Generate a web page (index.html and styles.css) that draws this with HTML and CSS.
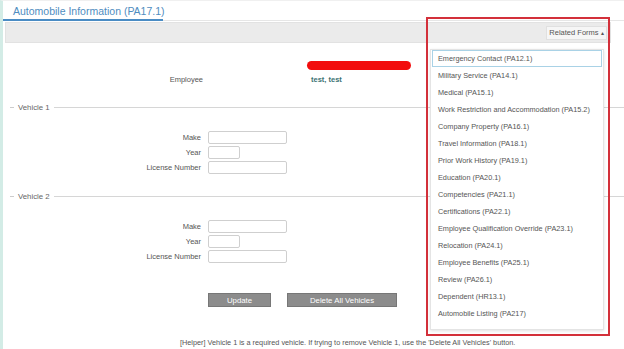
FILE: index.html
```html
<!DOCTYPE html>
<html lang="en">
<head>
    <meta charset="UTF-8">
    <title>Automobile Information (PA17.1)</title>
    <link rel="stylesheet" href="styles.css">
</head>
<body>
    <div class="page">
        <div class="tabs">
            <div class="tab">Automobile Information (PA17.1)</div>
        </div>

        <div class="toolbar">
            <button class="related-btn">Related Forms <span class="caret">&#9652;</span></button>
        </div>

        <div class="employee">
            <div class="label">Employee</div>
            <div class="value">
                <div class="redact"></div>
                <div class="name">test, test</div>
            </div>
        </div>

        <div class="legend"><span class="dash"></span><span>Vehicle 1</span><span class="rule"></span></div>
        <div class="fields">
            <label>Make</label><input type="text" class="wide">
            <label>Year</label><input type="text" class="short">
            <label>License Number</label><input type="text" class="wide">
        </div>

        <div class="legend"><span class="dash"></span><span>Vehicle 2</span><span class="rule"></span></div>
        <div class="fields">
            <label>Make</label><input type="text" class="wide">
            <label>Year</label><input type="text" class="short">
            <label>License Number</label><input type="text" class="wide">
        </div>

        <div class="actions">
            <button class="update">Update</button>
            <button class="delete">Delete All Vehicles</button>
        </div>

        <p class="helper">[Helper] Vehicle 1 is a required vehicle. If trying to remove Vehicle 1, use the 'Delete All Vehicles' button.</p>

        <!-- highlighted related forms menu -->
        <div class="highlight"></div>
        <ul class="menu">
            <li class="active">Emergency Contact (PA12.1)</li>
            <li>Military Service (PA14.1)</li>
            <li>Medical (PA15.1)</li>
            <li>Work Restriction and Accommodation (PA15.2)</li>
            <li>Company Property (PA16.1)</li>
            <li>Travel Information (PA18.1)</li>
            <li>Prior Work History (PA19.1)</li>
            <li>Education (PA20.1)</li>
            <li>Competencies (PA21.1)</li>
            <li>Certifications (PA22.1)</li>
            <li>Employee Qualification Override (PA23.1)</li>
            <li>Relocation (PA24.1)</li>
            <li>Employee Benefits (PA25.1)</li>
            <li>Review (PA26.1)</li>
            <li>Dependent (HR13.1)</li>
            <li>Automobile Listing (PA217)</li>
        </ul>
    </div>
</body>
</html>
```

FILE: styles.css
```css
body {
    margin: 0;
    background-color: white;
    font-family: "Liberation Sans", Arial, sans-serif;
    font-size: 7.5px;
    color: #555;
}
.page {
    position: relative;
    height: 349px;
    border-left: 3px solid #d3ece6;
    border-top: 1px solid #f0f0f0;
    box-sizing: border-box;
    overflow: hidden;
}
.tabs {
    height: 19px;
    border-bottom: 1px solid #e6e6e6;
}
.tab {
    width: 150px;
    height: 18px;
    padding-left: 10px;
    line-height: 20px;
    font-size: 10.5px;
    color: #4f8dc0;
    white-space: nowrap;
    border-bottom: 2px solid #4a8cc4;
}
.toolbar {
    margin: 1px 13px 0 2px;
    height: 21px;
    background-color: #ebebeb;
    border: 1px solid #e2e2e2;
    box-sizing: border-box;
    display: flex;
    justify-content: flex-end;
    align-items: center;
    padding-right: 3px;
}
.related-btn {
    height: 14px;
    width: 61px;
    padding: 0;
    background-color: #f6f6f6;
    border: 1px solid #e0e0e0;
    font-family: inherit;
    font-size: 7.5px;
    color: #555;
}
.caret {
    font-size: 6px;
}
.employee {
    display: grid;
    grid-template-columns: 200px auto;
    column-gap: 108px;
    margin-top: 18px;
}
.employee .label {
    align-self: end;
    text-align: right;
    line-height: 10px;
}
.redact {
    width: 104px;
    height: 9px;
    margin-left: -4px;
    background-color: #f20d0d;
    border-radius: 5px;
}
.name {
    margin-top: 5px;
    line-height: 10px;
    font-weight: bold;
    color: #3b7272;
}
.legend {
    display: flex;
    align-items: center;
    gap: 4px;
    height: 10px;
    margin-top: 17px;
    margin-left: 7px;
    font-size: 7.8px;
    color: #666;
}
.dash {
    width: 4px;
    border-top: 1px solid #ccc;
}
.rule {
    flex: 1;
    border-top: 1px solid #d6d6d6;
}
.fields {
    display: grid;
    grid-template-columns: 198px auto;
    column-gap: 7px;
    row-gap: 2px;
    margin-top: 19px;
    justify-items: start;
    align-items: center;
}
.fields label {
    justify-self: end;
}
.fields input {
    height: 13px;
    box-sizing: border-box;
    border: 1px solid #cfcfcf;
    border-radius: 2px;
    padding: 0;
}
.fields .wide {
    width: 79px;
}
.fields .short {
    width: 32px;
}
.fields + .legend {
    margin-top: 17px;
}
.actions {
    display: flex;
    gap: 16px;
    margin-top: 30px;
    padding-left: 205px;
}
.actions button {
    height: 14px;
    padding: 0;
    background-color: #8c8c8c;
    border: 1px solid #777;
    color: white;
    font-family: inherit;
    font-size: 7.8px;
}
.update {
    width: 63px;
}
.delete {
    width: 110px;
}
.helper {
    margin: 31px 0 0 177px;
    line-height: 10px;
    font-size: 7.3px;
    color: #555;
    white-space: nowrap;
}
.highlight {
    position: absolute;
    left: 423px;
    top: 16px;
    width: 184px;
    height: 319px;
    border: 2px solid #d3303a;
    box-sizing: border-box;
}
.menu {
    position: absolute;
    left: 427px;
    top: 48px;
    width: 174px;
    height: 281px;
    box-sizing: border-box;
    margin: 0;
    padding: 0 1px 9px;
    list-style: none;
    background-color: white;
    border: 1px solid #e4e4e4;
    box-shadow: 0 1px 3px rgba(0,0,0,0.12);
}
.menu li {
    height: 17px;
    line-height: 17px;
    padding-left: 6px;
    font-size: 7.3px;
    color: #555;
    white-space: nowrap;
}
.menu li.active {
    border: 1px solid #a9d2e6;
    line-height: 15px;
    box-sizing: border-box;
    padding-left: 5px;
}
```
